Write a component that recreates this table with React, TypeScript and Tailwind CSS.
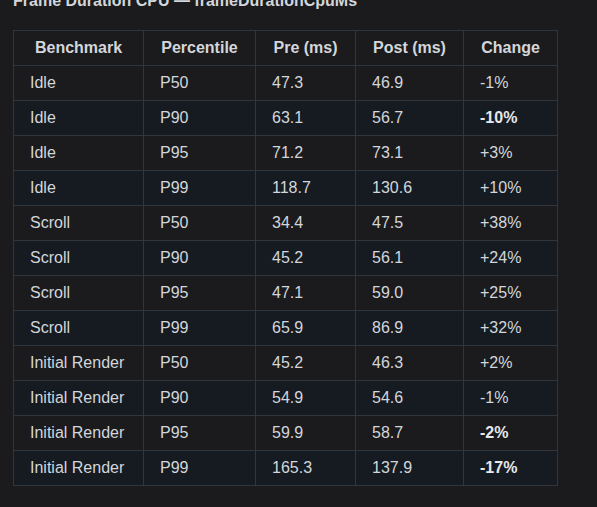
type Row = {
  bench: string
  pct: string
  pre: string
  post: string
  change: string
  bold?: boolean
}

const ROWS: Row[] = [
  { bench: 'Idle', pct: 'P50', pre: '47.3', post: '46.9', change: '-1%' },
  { bench: 'Idle', pct: 'P90', pre: '63.1', post: '56.7', change: '-10%', bold: true },
  { bench: 'Idle', pct: 'P95', pre: '71.2', post: '73.1', change: '+3%' },
  { bench: 'Idle', pct: 'P99', pre: '118.7', post: '130.6', change: '+10%' },
  { bench: 'Scroll', pct: 'P50', pre: '34.4', post: '47.5', change: '+38%' },
  { bench: 'Scroll', pct: 'P90', pre: '45.2', post: '56.1', change: '+24%' },
  { bench: 'Scroll', pct: 'P95', pre: '47.1', post: '59.0', change: '+25%' },
  { bench: 'Scroll', pct: 'P99', pre: '65.9', post: '86.9', change: '+32%' },
  { bench: 'Initial Render', pct: 'P50', pre: '45.2', post: '46.3', change: '+2%' },
  { bench: 'Initial Render', pct: 'P90', pre: '54.9', post: '54.6', change: '-1%' },
  { bench: 'Initial Render', pct: 'P95', pre: '59.9', post: '58.7', change: '-2%', bold: true },
  { bench: 'Initial Render', pct: 'P99', pre: '165.3', post: '137.9', change: '-17%', bold: true },
]

const HEADERS = [
  { label: 'Benchmark', w: 'w-[130px]' },
  { label: 'Percentile', w: 'w-[112px]' },
  { label: 'Pre (ms)', w: 'w-[100px]' },
  { label: 'Post (ms)', w: 'w-[108px]' },
  { label: 'Change', w: 'w-[94px]' },
]

const cell = 'border border-[#30363d] px-4 py-[5px] leading-6'

export default function App() {
  return (
    <div className="min-h-[507px] bg-[#1b1b1d] pl-[13px] text-[#d3d6da] font-['Liberation_Sans',Arial,sans-serif] text-base overflow-hidden">
      {/* heading is scrolled mostly out of view */}
      <h3 className="-mt-[11px] mb-[17px] font-bold leading-6 text-[#d3d6da]">
        Frame Duration CPU — frameDurationCpuMs
      </h3>

      <table className="table-fixed border-collapse w-[544px]">
        <thead>
          <tr>
            {HEADERS.map((h) => (
              <th key={h.label} className={`${cell} ${h.w} text-center font-bold`}>
                {h.label}
              </th>
            ))}
          </tr>
        </thead>
        <tbody>
          {ROWS.map((r, i) => (
            <tr key={i} className={i % 2 === 1 ? 'bg-[#161b22]' : ''}>
              <td className={cell}>{r.bench}</td>
              <td className={cell}>{r.pct}</td>
              <td className={cell}>{r.pre}</td>
              <td className={cell}>{r.post}</td>
              <td className={`${cell} ${r.bold ? 'font-bold text-[#e6e8eb]' : ''}`}>{r.change}</td>
            </tr>
          ))}
        </tbody>
      </table>
    </div>
  )
}
